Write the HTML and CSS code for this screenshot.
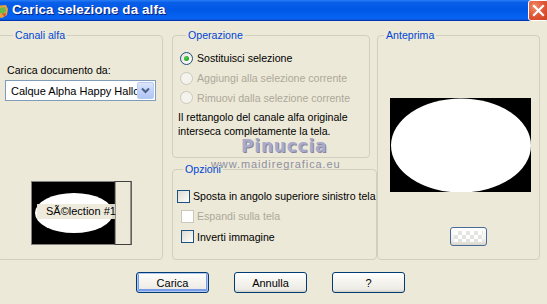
FILE: index.html
```html
<!DOCTYPE html>
<html lang="it">
<head>
<meta charset="utf-8">
<title>Carica selezione da alfa</title>
<link rel="stylesheet" href="styles.css">
</head>
<body>
<div class="window">
  <div class="titlebar">
    <svg class="app-icon" width="9" height="16" viewBox="0 0 9 16">
      <path d="M-4 3 L6 2 L8 6 L7 12 L2 15 L-4 14 Z" fill="#e8a040"/>
      <path d="M0 5 L5 4 L6 8 L3 11 L0 10 Z" fill="#6cb84a"/>
      <path d="M2 11 L6 10 L5 14 Z" fill="#d9503a"/>
    </svg>
    <span class="title">Carica selezione da alfa</span>
    <div class="close">
      <svg width="21" height="21" viewBox="0 0 21 21">
        <path d="M6 6 L15 15 M15 6 L6 15" stroke="#fff" stroke-width="2.2" stroke-linecap="square"/>
      </svg>
    </div>
  </div>
  <div class="content">
    <div class="panels">
      <fieldset class="group g-channels">
        <legend>Canali alfa</legend>
        <div class="field-label">Carica documento da:</div>
        <div class="select">
          <span class="select-text">Calque Alpha Happy Halloween</span>
          <span class="select-btn">
            <svg width="9" height="7" viewBox="0 0 9 7"><path d="M1 1.5 L4.5 5 L8 1.5" fill="none" stroke="#4d6185" stroke-width="2"/></svg>
          </span>
        </div>
        <div class="thumb">
          <svg width="101" height="64" viewBox="0 0 101 64">
            <rect x="0" y="0" width="101" height="64" fill="#808080"/>
            <rect x="1" y="1" width="84" height="62" fill="#000"/>
            <ellipse cx="43" cy="32" rx="39" ry="20" fill="#fff"/>
            <rect x="84" y="0.5" width="16" height="63" fill="#ece9d8" stroke="#404040"/>
          </svg>
          <span class="thumb-label">SÃ©lection #1</span>
        </div>
      </fieldset>

      <div class="col-mid">
        <fieldset class="group g-op">
          <legend>Operazione</legend>
          <div class="radio-row"><span class="radio checked"></span><span>Sostituisci selezione</span></div>
          <div class="radio-row disabled"><span class="radio"></span><span>Aggiungi alla selezione corrente</span></div>
          <div class="radio-row disabled"><span class="radio"></span><span>Rimuovi dalla selezione corrente</span></div>
          <p class="desc">Il rettangolo del canale alfa originale<br>interseca completamente la tela.</p>
        </fieldset>
        <fieldset class="group g-opt">
          <legend>Opzioni</legend>
          <div class="check-row first"><span class="check"></span><span>Sposta in angolo superiore sinistro tela</span></div>
          <div class="check-row disabled"><span class="check"></span><span>Espandi sulla tela</span></div>
          <div class="check-row"><span class="check"></span><span>Inverti immagine</span></div>
        </fieldset>
      </div>

      <fieldset class="group g-preview">
        <legend>Anteprima</legend>
        <div class="preview">
          <svg width="141" height="94" viewBox="0 0 141 94">
            <rect width="141" height="94" fill="#000"/>
            <ellipse cx="71" cy="47.5" rx="70" ry="47" fill="#fff"/>
          </svg>
        </div>
        <div class="bg-btn"><span class="checker"></span></div>
      </fieldset>
    </div>

    <div class="buttons">
      <button class="btn default">Carica</button>
      <button class="btn">Annulla</button>
      <button class="btn">?</button>
    </div>

    <div class="wm-name">Pinuccia</div>
    <div class="wm-site">www.maidiregrafica.eu</div>
  </div>
</div>
</body>
</html>
```

FILE: styles.css
```css
* { box-sizing: border-box; }

html, body {
  margin: 0;
  padding: 0;
  width: 547px;
  height: 304px;
  overflow: hidden;
  background: #ece9d8;
}

body {
  font-family: "Liberation Sans", Arial, sans-serif;
  font-size: 10.6px;
  color: #000;
}

.window {
  position: relative;
  width: 547px;
  height: 304px;
  background: #ece9d8;
}

/* title bar */
.titlebar {
  height: 21px;
  display: flex;
  align-items: center;
  background: linear-gradient(#2a7cf5 0%, #0a5fe8 12%, #0058e6 45%, #0662f2 80%, #0a60ea 92%, #003bbd 96%, #002d9a 100%);
  position: relative;
}

.app-icon {
  flex: none;
  margin-top: 1px;
}

.title {
  margin-left: 3px;
  color: #fff;
  font-weight: bold;
  font-size: 13.4px;
  letter-spacing: 0.1px;
  text-shadow: 1px 1px 0 #0a1e78;
  margin-top: -2px;
}

.close {
  position: absolute;
  right: -2px;
  top: 0;
  width: 21px;
  height: 21px;
  border: 1px solid #fff;
  border-radius: 3px;
  background: radial-gradient(circle at 30% 30%, #f0906a 0%, #e2583a 45%, #c8401e 100%);
}
.close svg { display: block; margin: -1px; }

/* content */
.content {
  padding-top: 7px;
}

.panels {
  display: grid;
  grid-template-columns: 166px 205px 164px;
  column-gap: 9px;
  margin-left: -3px;
  height: 232px;
}
.panels > .g-preview { margin-left: -9px; width: 163px; }

.group {
  margin: 0;
  padding: 0;
  min-width: 0;
  border: 1px solid #d0d0bf;
  border-radius: 4px;
}
.group legend {
  margin-left: 6px;
  padding: 0 2px;
  color: #0046d5;
  line-height: 14px;
}

/* Canali alfa */
.g-channels {
  height: 232px;
  padding-left: 9px;
}
.field-label {
  margin-top: 21px;
  line-height: 14px;
}
.select {
  margin-top: 3px;
  margin-left: -2px;
  width: 151px;
  height: 21px;
  border: 1px solid #7f9db9;
  background: #fff;
  display: flex;
  align-items: center;
  padding: 1px;
}
.select-text {
  flex: 1;
  overflow: hidden;
  white-space: nowrap;
  padding-left: 4px;
  font-size: 11px;
}
.select-btn {
  flex: none;
  width: 17px;
  height: 17px;
  border-radius: 2px;
  background: linear-gradient(#dce6fd, #c1d3fb 50%, #b2c6f5);
  border: 1px solid #bacbf3;
  display: flex;
  align-items: center;
  justify-content: center;
}
.thumb {
  position: relative;
  margin-top: 80px;
  margin-left: 24px;
  width: 101px;
  height: 64px;
}
.thumb svg { display: block; }
.thumb-label {
  position: absolute;
  left: 6px;
  top: 23px;
  width: 78px;
  height: 15px;
  line-height: 15px;
  padding-left: 9px;
  background: rgba(236, 233, 216, 0.9);
  font-size: 11px;
  white-space: nowrap;
}

/* middle column */
.col-mid {
  display: flex;
  flex-direction: column;
}
.g-op {
  width: 198px;
  height: 130px;
  padding-left: 7px;
}
.radio-row {
  height: 20px;
  display: flex;
  align-items: center;
  gap: 4px;
  white-space: nowrap;
}
.radio-row:first-of-type { margin-top: 6px; }
.radio-row:last-of-type { height: 19px; }
.radio {
  width: 13px;
  height: 13px;
  border-radius: 50%;
  border: 1px solid #1c5180;
  background: radial-gradient(circle at 65% 65%, #fff 0%, #f4f3ee 40%, #dcdbd2 100%);
  position: relative;
  flex: none;
}
.radio.checked::after {
  content: "";
  position: absolute;
  left: 3px;
  top: 3px;
  width: 5px;
  height: 5px;
  border-radius: 50%;
  background: radial-gradient(circle at 40% 40%, #55d055, #21a121 70%);
}
.disabled { color: #aca899; }
.disabled .radio {
  border-color: #cac8bb;
  background: #f4f3ee;
}
.desc {
  margin: 3px 0 0 -2px;
  line-height: 14px;
}

.g-opt {
  margin-top: 4px;
  width: 205px;
  height: 98px;
  padding-left: 4px;
}
.check-row {
  height: 20px;
  display: flex;
  align-items: center;
  gap: 3px;
  white-space: nowrap;
  margin-left: 4px;
}
.check-row.first { margin-top: 10px; margin-left: 0; }
.check-row:last-of-type { height: 21px; }
.check {
  flex: none;
  width: 13px;
  height: 13px;
  border: 1px solid #1c5180;
  background: linear-gradient(135deg, #dcdbd5 0%, #f1f0ea 60%, #fff 100%);
}
.disabled .check {
  border-color: #cac8bb;
  background: #fff;
}

/* Anteprima */
.g-preview {
  height: 232px;
}
.preview {
  margin-top: 56px;
  margin-left: 12px;
  width: 141px;
  height: 94px;
}
.preview svg { display: block; }
.bg-btn {
  margin-top: 35px;
  margin-left: 72px;
  width: 37px;
  height: 19px;
  border: 1px solid #4a6a9a;
  border-radius: 3px;
  background: linear-gradient(#fff, #f0efea 70%, #d8d5ca);
  display: flex;
  align-items: center;
  justify-content: center;
}
.checker {
  width: 29px;
  height: 11px;
  background-color: #fff;
  background-image: conic-gradient(#e2e2e2 25%, #fff 0 50%, #e2e2e2 0 75%, #fff 0);
  background-size: 8px 8px;
  opacity: 0.9;
}

/* buttons */
.buttons {
  display: flex;
  gap: 25px;
  margin-top: 12px;
  margin-left: 136px;
}
.btn {
  width: 73px;
  height: 21px;
  padding: 0;
  font-family: "Liberation Sans", Arial, sans-serif;
  font-size: 11px;
  color: #000;
  border: 1px solid #003c74;
  border-radius: 3px;
  background: linear-gradient(#fff 0%, #f6f5f0 40%, #ecebe5 85%, #d6d0c5 100%);
}
.btn.default {
  box-shadow: inset 0 0 0 1px #b0c8f2, inset 0 -1px 0 2px #7a9ce8;
}

/* watermark overlay */
.wm-name {
  position: absolute;
  left: 241px;
  top: 136px;
  font-family: "DejaVu Sans", sans-serif;
  font-weight: bold;
  font-size: 17px;
  letter-spacing: 0.8px;
  color: #a9a9c8;
  text-shadow: 1px 1px 0 #85859f;
}
.wm-site {
  position: absolute;
  left: 211px;
  top: 158px;
  font-size: 11px;
  letter-spacing: 0.9px;
  color: #8f8fa0;
}
```
